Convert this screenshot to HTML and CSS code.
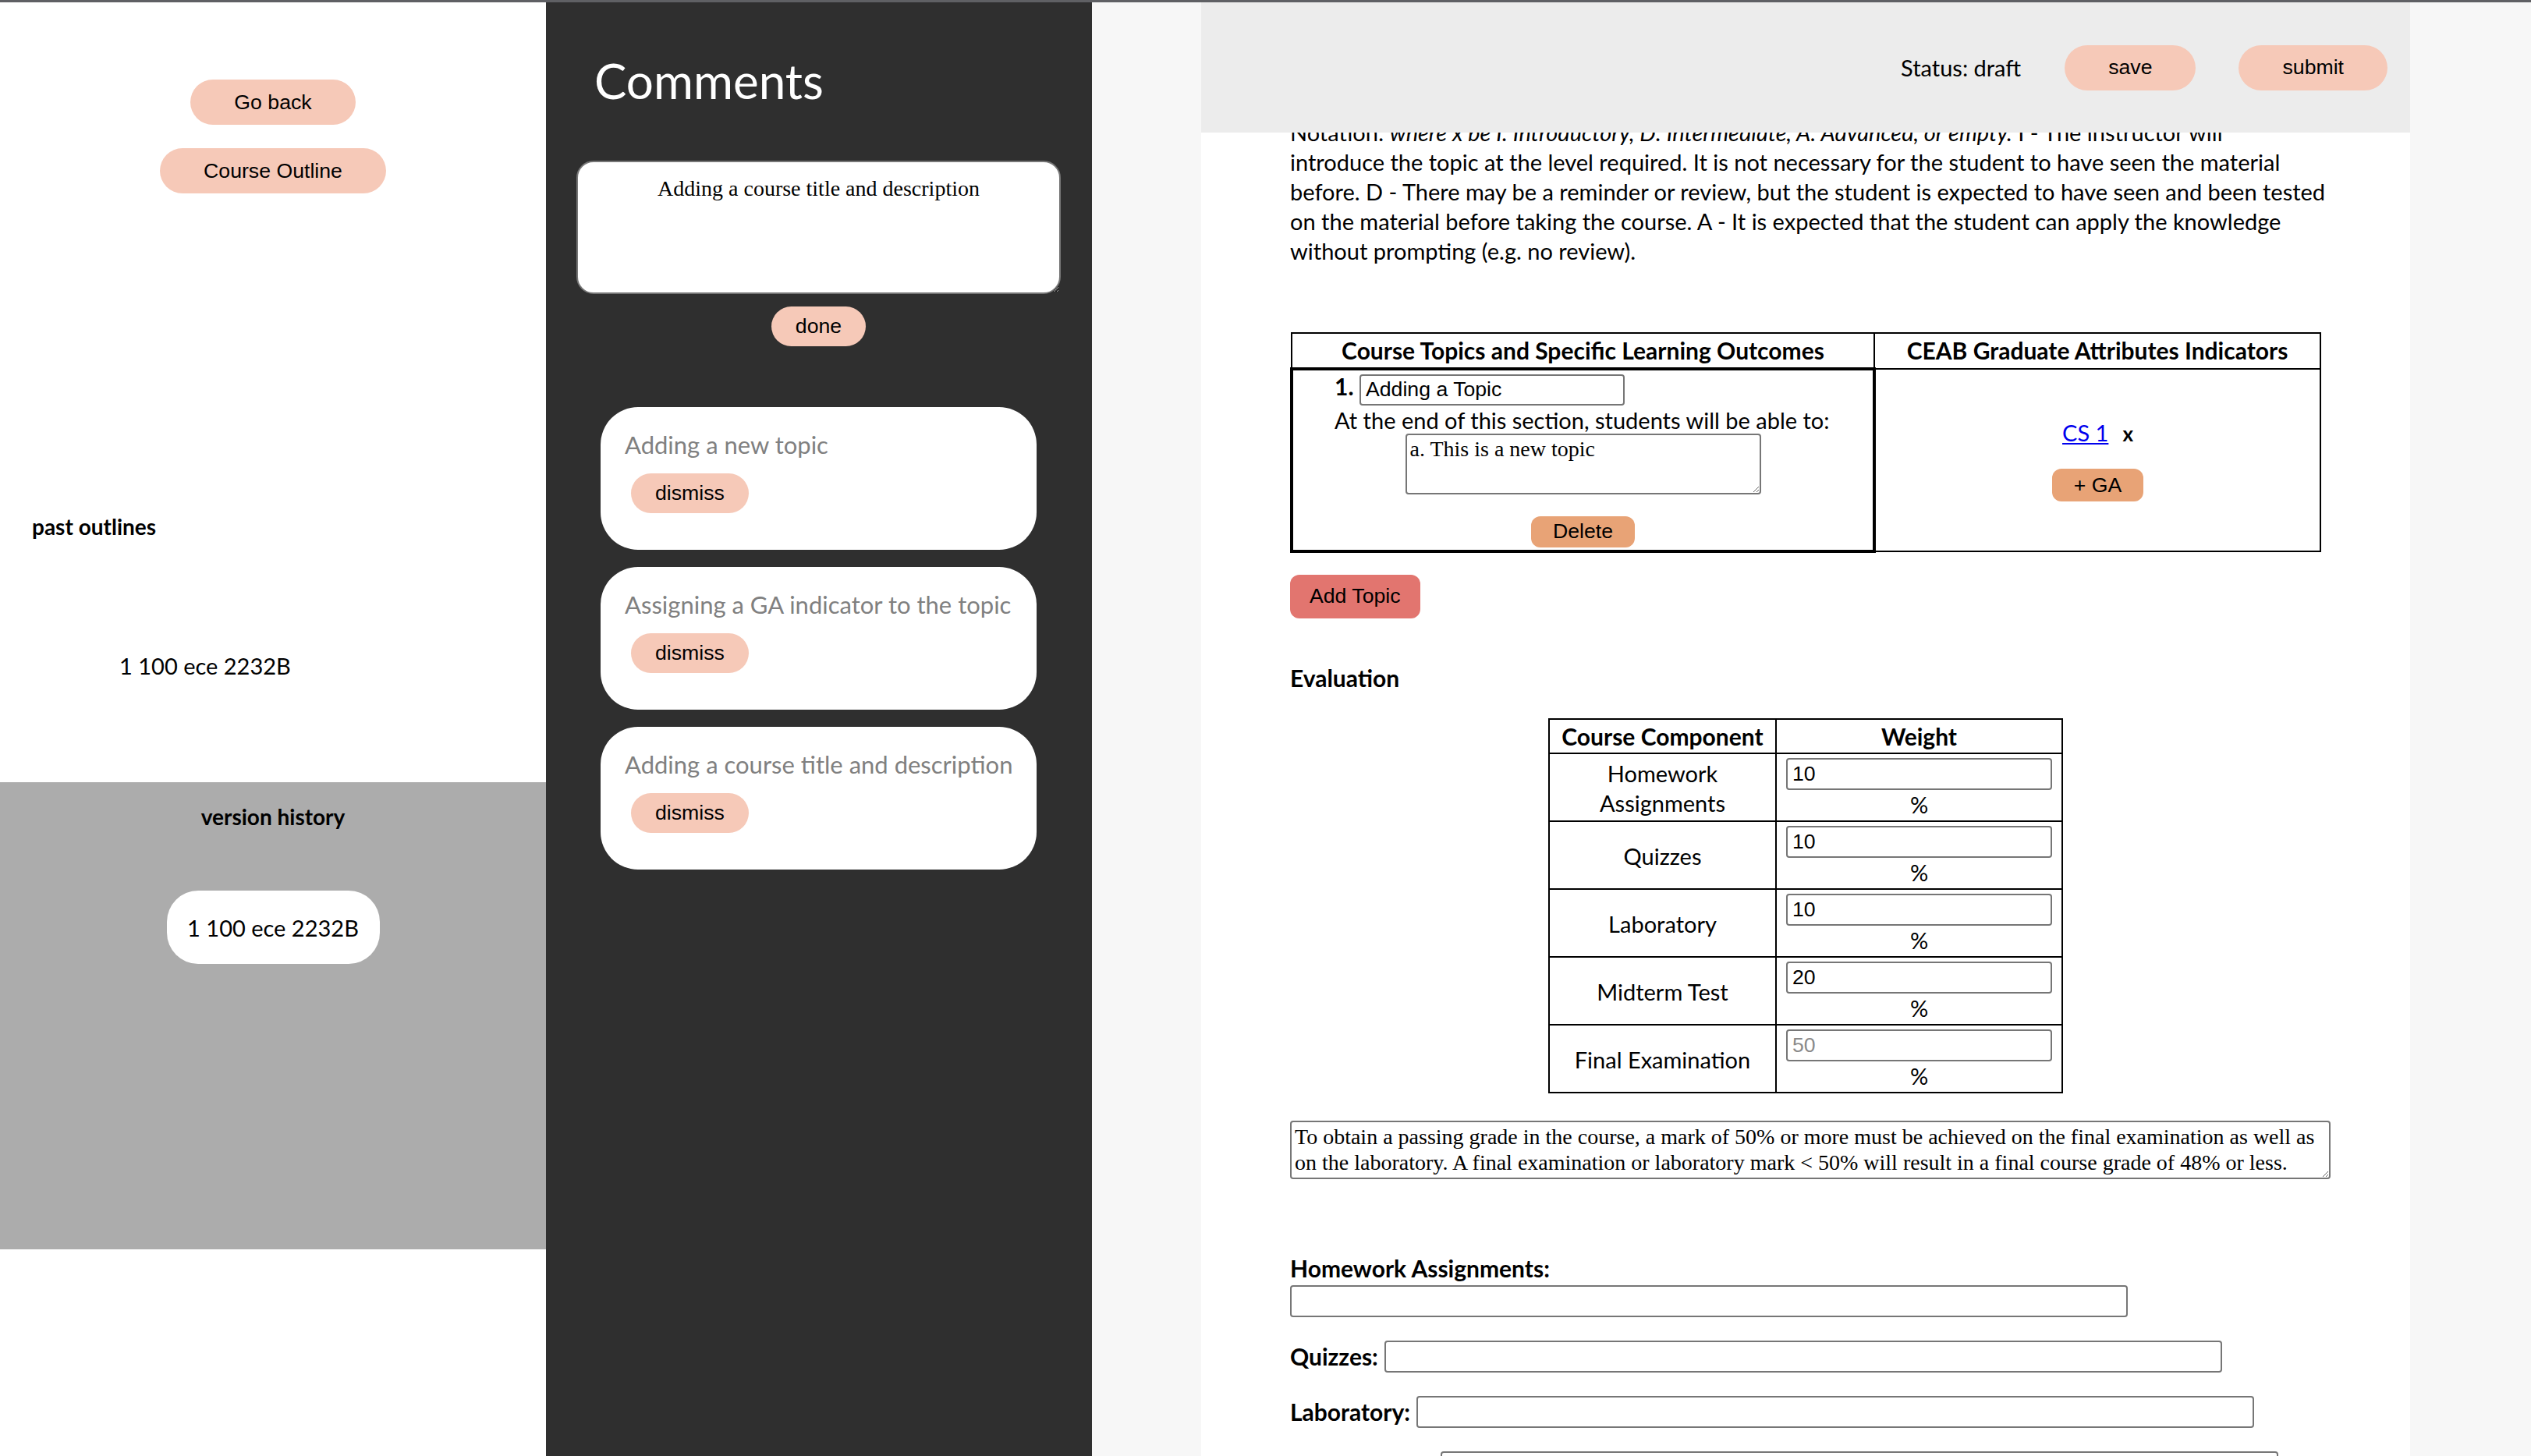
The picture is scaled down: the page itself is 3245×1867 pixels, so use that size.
FILE: index.html
```html
<!DOCTYPE html>
<html lang="en">
<head>
<meta charset="utf-8">
<title>Course Outline Editor</title>
<link rel="stylesheet" href="styles.css">
</head>
<body>
<div class="topbar"></div>
<div class="app">
  <aside class="sidebar">
    <div class="sidebar-top">
      <nav class="nav">
        <button class="pill">Go back</button>
        <button class="pill">Course Outline</button>
      </nav>
      <h4 class="past-title">past outlines</h4>
      <div class="past-item">1 100 ece 2232B</div>
    </div>
    <div class="versions">
      <h4 class="versions-title">version history</h4>
      <div class="version-pill">1 100 ece 2232B</div>
    </div>
  </aside>

  <section class="comments">
    <h1 class="comments-title">Comments</h1>
    <div class="new-comment">
      <textarea class="comment-input">Adding a course title and description</textarea>
      <button class="pill small done">done</button>
    </div>
    <div class="cards">
      <div class="card">
        <p class="card-text">Adding a new topic</p>
        <button class="pill small">dismiss</button>
      </div>
      <div class="card">
        <p class="card-text">Assigning a GA indicator to the topic</p>
        <button class="pill small">dismiss</button>
      </div>
      <div class="card">
        <p class="card-text">Adding a course title and description</p>
        <button class="pill small">dismiss</button>
      </div>
    </div>
  </section>

  <div class="main-wrap">
    <main class="main">
      <header class="mainbar">
        <span class="status">Status: draft</span>
        <button class="pill save">save</button>
        <button class="pill">submit</button>
      </header>
      <div class="content">
        <p class="notation">Notation: <em>where x be I: Introductory, D: Intermediate, A: Advanced, or empty.</em> I - The instructor will<br>introduce the topic at the level required. It is not necessary for the student to have seen the material<br>before. D - There may be a reminder or review, but the student is expected to have seen and been tested<br>on the material before taking the course. A - It is expected that the student can apply the knowledge<br>without prompting (e.g. no review).</p>

        <table class="topics">
          <thead>
            <tr>
              <th class="col-topic">Course Topics and Specific Learning Outcomes</th>
              <th class="col-ga">CEAB Graduate Attributes Indicators</th>
            </tr>
          </thead>
          <tbody>
            <tr>
              <td class="topic-cell">
                <div class="topic-row"><b>1.</b> <input class="topic-input" type="text" value="Adding a Topic"></div>
                <div class="topic-row outcome-lead">At the end of this section, students will be able to:</div>
                <textarea class="outcome-input">a. This is a new topic</textarea>
                <div class="center"><button class="btn-orange delete">Delete</button></div>
              </td>
              <td class="ga-cell">
                <div class="ga-line"><a href="#" class="ga-link">CS 1</a><b class="ga-x">x</b></div>
                <button class="btn-orange add-ga">+ GA</button>
              </td>
            </tr>
          </tbody>
        </table>

        <button class="add-topic">Add Topic</button>

        <h4 class="section-title">Evaluation</h4>

        <table class="evaluation">
          <thead>
            <tr><th class="ev-comp">Course Component</th><th>Weight</th></tr>
          </thead>
          <tbody>
            <tr><td>Homework<br>Assignments</td><td><input class="weight" type="text" value="10">%</td></tr>
            <tr><td>Quizzes</td><td><input class="weight" type="text" value="10">%</td></tr>
            <tr><td>Laboratory</td><td><input class="weight" type="text" value="10">%</td></tr>
            <tr><td>Midterm Test</td><td><input class="weight" type="text" value="20">%</td></tr>
            <tr><td>Final Examination</td><td><input class="weight" type="text" placeholder="50">%</td></tr>
          </tbody>
        </table>

        <textarea class="policy">To obtain a passing grade in the course, a mark of 50% or more must be achieved on the final examination as well as on the laboratory. A final examination or laboratory mark &lt; 50% will result in a final course grade of 48% or less.</textarea>

        <div class="fields">
          <div class="field"><label class="field-label">Homework Assignments:</label><input class="field-input" type="text"></div>
          <div class="field"><label class="field-label">Quizzes:</label><input class="field-input" type="text"></div>
          <div class="field"><label class="field-label">Laboratory:</label><input class="field-input" type="text"></div>
          <div class="field"><label class="field-label">Midterm Test:</label><input class="field-input" type="text"></div>
          <div class="field"><label class="field-label">Final Examination:</label><input class="field-input" type="text"></div>
        </div>
      </div>
    </main>
  </div>
</div>
</body>
</html>
```

FILE: styles.css
```css
* { box-sizing: border-box; }

html, body {
  margin: 0;
  height: 100%;
  overflow: hidden;
}

body {
  font-family: Lato, "Noto Sans", sans-serif;
  font-size: 29px;
  color: #000;
  background: #f7f7f7;
}

b, th, h4, label {
  font-size: 30px;
}

.topbar {
  height: 3px;
  background: #5f6064;
}

.app {
  display: flex;
  height: calc(100vh - 3px);
}

/* ---------- buttons ---------- */
.pill {
  font-family: "Liberation Sans", Arial, sans-serif;
  font-size: 26.67px;
  color: #000;
  background: #f6c9b8;
  border: none;
  border-radius: 999px;
  height: 58px;
  padding: 0 56px;
}

.pill.small {
  height: 51px;
  padding: 0 31px;
}

/* ---------- left sidebar ---------- */
.sidebar {
  width: 700px;
  flex: none;
  background: #fff;
  display: flex;
  flex-direction: column;
}

.sidebar-top {
  height: 1000px;
  padding-top: 99px;
}

.nav {
  display: flex;
  flex-direction: column;
  align-items: center;
  gap: 30px;
}

.past-title {
  margin: 410px 0 0;
  padding-left: 41px;
  font-size: 28px;
  line-height: 34px;
  font-weight: bold;
}

.past-item {
  margin-top: 143px;
  padding-left: 153px;
  line-height: 38px;
}

.versions {
  height: 599px;
  background: #acacac;
  padding-top: 27px;
  display: flex;
  flex-direction: column;
  align-items: center;
}

.versions-title {
  margin: 0;
  font-size: 28px;
  line-height: 34px;
  font-weight: bold;
}

.version-pill {
  margin-top: 78px;
  width: 273px;
  height: 94px;
  border-radius: 40px;
  background: #fff;
  display: flex;
  align-items: center;
  justify-content: center;
}

/* ---------- comments panel ---------- */
.comments {
  width: 700px;
  flex: none;
  background: #2f2f2f;
}

.comments-title {
  margin: 56px 0 0 62px;
  font-size: 62px;
  line-height: 88px;
  font-weight: normal;
  color: #fff;
}

.new-comment {
  margin: 59px 0 0 39px;
  width: 621px;
  display: flex;
  flex-direction: column;
  align-items: center;
}

.comment-input {
  display: block;
  width: 621px;
  height: 171px;
  border: 2px solid #767676;
  border-radius: 22px;
  padding: 18px 20px;
  font-family: "Liberation Serif", "Times New Roman", serif;
  font-size: 28px;
  text-align: center;
  background: #fff;
  color: #000;
}

.done {
  margin-top: 16px;
  height: 50px;
}

.cards {
  margin: 78px 0 0 70px;
  width: 559px;
  display: flex;
  flex-direction: column;
  gap: 22px;
}

.card {
  height: 183px;
  background: #fff;
  border-radius: 48px;
  padding: 26px 0 0 31px;
}

.card-text {
  margin: 0 0 15px;
  font-size: 31px;
  line-height: 44px;
  color: #808080;
}

.card .pill {
  margin-left: 8px;
}

/* ---------- main ---------- */
.main-wrap {
  flex: 1;
  padding-left: 140px;
  background: #f7f7f7;
}

.main {
  position: relative;
  width: 1550px;
  height: 100%;
  background: #fff;
  overflow: hidden;
}

.mainbar {
  position: absolute;
  top: 0;
  left: 0;
  right: 0;
  height: 167px;
  background: #ececec;
  display: flex;
  align-items: center;
  justify-content: flex-end;
  padding-right: 29px;
  z-index: 2;
}

.status {
  margin-right: 56px;
}

.save {
  margin-right: 55px;
}

.content {
  padding: 148px 0 0 114px;
  width: 1450px;
}

.notation {
  margin: 0;
  line-height: 38px;
  white-space: nowrap;
}

/* topics table */
.topics {
  margin-top: 85px;
  width: 1322px;
  border-collapse: collapse;
}

.topics th {
  border: 2px solid #000;
  height: 46px;
  padding: 0 0 2px;
  font-weight: bold;
  line-height: 38px;
}

.col-topic { width: 747px; }

.topic-cell {
  border: 4px solid #000;
  padding: 2px 0 3px;
  vertical-align: top;
}

.topic-row {
  padding-left: 53px;
  line-height: 36px;
}

.topic-input {
  width: 340px;
  height: 40px;
  border: 2px solid #767676;
  border-radius: 4px;
  padding: 0 6px;
  font-family: "Liberation Sans", Arial, sans-serif;
  font-size: 26.67px;
  vertical-align: middle;
}

.outcome-lead {
  margin-top: 1px;
}

.outcome-input {
  display: block;
  margin: -1px auto 0;
  width: 456px;
  height: 78px;
  border: 2px solid #767676;
  border-radius: 4px;
  padding: 2px 4px;
  font-family: "Liberation Serif", "Times New Roman", serif;
  font-size: 28px;
}

.center { text-align: center; }

.btn-orange {
  font-family: "Liberation Sans", Arial, sans-serif;
  font-size: 26.67px;
  color: #000;
  background: #e8a376;
  border: none;
  border-radius: 12px;
  padding: 0 28px;
}

.delete {
  margin-top: 28px;
  height: 40px;
}

.ga-cell {
  border: 2px solid #000;
  text-align: center;
  vertical-align: middle;
}

.ga-line {
  line-height: 38px;
}

.ga-link {
  color: #0000ee;
  text-decoration: underline;
}

.ga-x {
  margin-left: 18px;
  font-size: 26px;
}

.add-topic {
  display: block;
  margin-top: 28px;
  height: 56px;
  padding: 0 25px;
  border: none;
  border-radius: 12px;
  background: #e2756f;
  color: #000;
  font-family: "Liberation Sans", Arial, sans-serif;
  font-size: 26.67px;
}

.add-ga {
  margin-top: 26px;
  height: 42px;
}

.section-title {
  margin: 57px 0 0;
  line-height: 38px;
  font-weight: bold;
}

/* evaluation table */
.evaluation {
  margin: 33px 0 0 331px;
  width: 660px;
  border-collapse: collapse;
}

.evaluation th {
  border: 2px solid #000;
  height: 44px;
  padding: 0;
  line-height: 38px;
}

.ev-comp { width: 292px; }

.evaluation td {
  border: 2px solid #000;
  height: 87px;
  padding: 4px 12px 0;
  text-align: center;
  line-height: 38px;
}

.weight {
  display: block;
  width: 341px;
  height: 41px;
  margin: 0 auto;
  border: 2px solid #767676;
  border-radius: 4px;
  padding: 0 6px;
  font-family: "Liberation Sans", Arial, sans-serif;
  font-size: 26.67px;
  color: #000;
}

.weight::placeholder {
  color: #8a8a8a;
}

.policy {
  display: block;
  margin-top: 35px;
  width: 1334px;
  height: 75px;
  border: 2px solid #767676;
  border-radius: 4px;
  padding: 2px 4px;
  font-family: "Liberation Serif", "Times New Roman", serif;
  font-size: 28px;
  line-height: 33px;
  resize: both;
}

.fields {
  margin-top: 95px;
  width: 1322px;
  display: flex;
  flex-direction: column;
  gap: 30px;
}

.field {
  display: flex;
  flex-wrap: wrap;
  align-items: center;
  column-gap: 8px;
  row-gap: 3px;
}

.field-label {
  font-weight: bold;
  line-height: 38px;
}

.field-input {
  width: 1074px;
  height: 41px;
  border: 2px solid #767676;
  border-radius: 4px;
  font-family: "Liberation Sans", Arial, sans-serif;
  font-size: 26.67px;
}
```
